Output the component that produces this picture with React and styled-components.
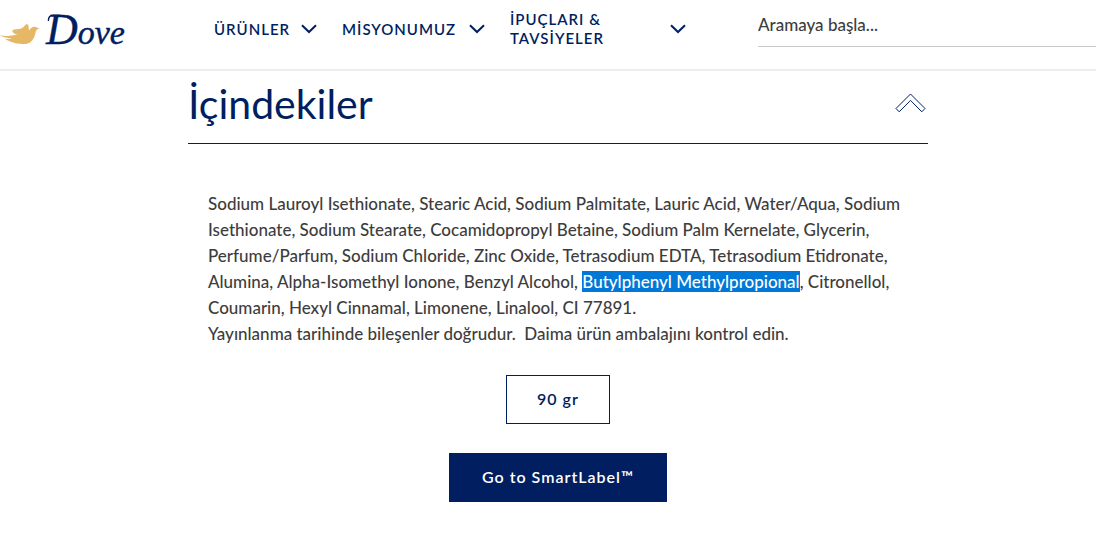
import React from "react";
import styled, { createGlobalStyle } from "styled-components";

const navy = "#001e60";
const ink = "#3d3d3d";

const GlobalStyle = createGlobalStyle`
  *, *::before, *::after { box-sizing: border-box; }
  body {
    margin: 0;
    background: #fff;
    color: ${ink};
    font-family: Lato, "Open Sans", sans-serif;
    font-size: 17px;
    font-weight: 500;
  }
  button, input { font: inherit; }
`;

const Header = styled.header`
  display: flex;
  align-items: center;
  min-height: 71px;
  padding-bottom: 11px;
  border-bottom: 2px solid #ededed;
`;

const LogoLink = styled.a`
  display: block;
  flex: none;
  width: 214px;
  height: 58px;
`;

const Nav = styled.nav`
  display: flex;
  flex: none;
  align-items: center;
  gap: 25px;
`;

const NavButton = styled.button`
  display: flex;
  align-items: center;
  justify-content: space-between;
  width: ${({ $width }) => $width}px;
  padding: 0;
  border: 0;
  background: none;
  color: ${navy};
  font-size: 15px;
  font-weight: 600;
  line-height: 19px;
  letter-spacing: 1px;
  text-align: left;
  cursor: pointer;
`;

const NavText = styled.span`
  max-width: 120px;
`;

const Chevron = styled.svg`
  flex: none;
  width: 16px;
  height: 10px;
  fill: none;
  stroke: ${navy};
  stroke-width: 2;
`;

const Search = styled.form`
  flex: 1;
  align-self: flex-start;
  min-width: 0;
  margin-left: 72px;
  padding-top: 3px;
`;

const SearchInput = styled.input`
  display: block;
  width: 100%;
  height: 44px;
  padding: 0;
  border: 0;
  border-bottom: 1px solid #c8c8c8;
  border-radius: 0;
  background: none;
  color: ${ink};
  outline: 0;
  &::placeholder { color: ${ink}; opacity: 1; }
`;

const Main = styled.main`
  padding-left: 20px;
`;

const Section = styled.section`
  max-width: 740px;
  margin: 0 auto;
`;

const Heading = styled.h2`
  margin: 0;
  border-bottom: 1px solid ${navy};
  color: ${navy};
  font-size: 41px;
  font-weight: 400;
`;

const Toggle = styled.button`
  display: flex;
  align-items: center;
  justify-content: space-between;
  width: 100%;
  height: 72px;
  padding: 0 2px 8px 0;
  border: 0;
  background: none;
  color: inherit;
  cursor: pointer;
`;

const UpArrow = styled.svg`
  width: 31px;
  height: 20px;
  fill: #fff;
  stroke: ${navy};
  stroke-width: 1;
`;

const Panel = styled.div`
  display: flex;
  flex-direction: column;
  align-items: center;
  padding: 47px 20px;
`;

const Ingredients = styled.p`
  width: 100%;
  margin: 0 0 28px;
  line-height: 26px;
`;

const Marked = styled.mark`
  background: #0078d7;
  color: #fff;
`;

const Action = styled.button`
  height: 49px;
  min-width: ${({ $primary }) => ($primary ? 218 : 104)}px;
  padding: 0 28px 3px;
  border: 1px solid ${navy};
  background: ${({ $primary }) => ($primary ? navy : "#fff")};
  color: ${({ $primary }) => ($primary ? "#fff" : navy)};
  font-size: 16px;
  font-weight: 600;
  letter-spacing: 1px;
  cursor: pointer;
  & + & { margin-top: 29px; }
`;

function Logo() {
  return (
    <svg width="130" height="58" viewBox="0 0 130 58" role="img" aria-label="Dove">
      <path
        fill="#e6b866"
        d="M0 35.3C5 36.3 11 36.3 17.6 34.6C13.8 33.7 12 32 12.3 30.4C14.5 28.8 18 29.8 21 28.6C24 27.4 24.5 25 26.8 24C29.4 24.8 28.2 28 29.3 30.2C30.5 28.8 31.5 26.8 34.5 26.8C36 26.8 36.6 27.8 39.4 28C37 29.6 36 30.2 35.4 33C34.4 38.5 31.5 43.8 24.5 44C15 44.4 9.5 41.5 4.8 38.8C8 39 10.5 38.8 12.5 38.2C8 38.3 3 37.2 0 35.3Z"
      />
      <path
        fill="none"
        stroke={navy}
        strokeWidth="1.4"
        strokeLinecap="round"
        d="M48.4 20.4C48.4 17.2 50.4 15.3 54 15.3L60 15.3"
      />
      <text
        x="46"
        y="44"
        fill={navy}
        stroke={navy}
        strokeWidth="0.4"
        fontFamily="Liberation Serif, serif"
        fontStyle="italic"
        fontSize="44"
      >
        D<tspan fontSize="34">ove</tspan>
      </text>
    </svg>
  );
}

function NavItem({ width, children }) {
  return (
    <NavButton type="button" $width={width}>
      <NavText>{children}</NavText>
      <Chevron viewBox="0 0 16 10" aria-hidden="true">
        <path d="M1 1.2L8 8L15 1.2" />
      </Chevron>
    </NavButton>
  );
}

export default function App() {
  return (
    <>
      <GlobalStyle />
      <Header>
        <LogoLink href="#" aria-label="Dove">
          <Logo />
        </LogoLink>
        <Nav>
          <NavItem width={103}>ÜRÜNLER</NavItem>
          <NavItem width={143}>MİSYONUMUZ</NavItem>
          <NavItem width={176}>
            İPUÇLARI &amp; TAVSİYELER
          </NavItem>
        </Nav>
        <Search role="search">
          <SearchInput type="text" aria-label="Arama" placeholder="Aramaya başla..." />
        </Search>
      </Header>
      <Main>
        <Section>
          <Heading>
            <Toggle type="button" aria-expanded="true">
              İçindekiler
              <UpArrow viewBox="0 0 31 20" aria-hidden="true">
                <path d="M15.5 1L30 15.5L26.8 18.8L15.5 7.4L4.2 18.8L1 15.5Z" />
              </UpArrow>
            </Toggle>
          </Heading>
          <Panel>
            <Ingredients>
              Sodium Lauroyl Isethionate, Stearic Acid, Sodium Palmitate, Lauric Acid, Water/Aqua, Sodium
              Isethionate, Sodium Stearate, Cocamidopropyl Betaine, Sodium Palm Kernelate, Glycerin,
              Perfume/Parfum, Sodium Chloride, Zinc Oxide, Tetrasodium EDTA, Tetrasodium Etidronate,
              Alumina, Alpha-Isomethyl Ionone, Benzyl Alcohol, <Marked>Butylphenyl Methylpropional</Marked>,
              Citronellol, Coumarin, Hexyl Cinnamal, Limonene, Linalool, CI 77891.
              <br />
              Yayınlanma tarihinde bileşenler doğrudur.&nbsp; Daima ürün ambalajını kontrol edin.
            </Ingredients>
            <Action type="button">90 gr</Action>
            <Action type="button" $primary>
              Go to SmartLabel™
            </Action>
          </Panel>
        </Section>
      </Main>
    </>
  );
}
